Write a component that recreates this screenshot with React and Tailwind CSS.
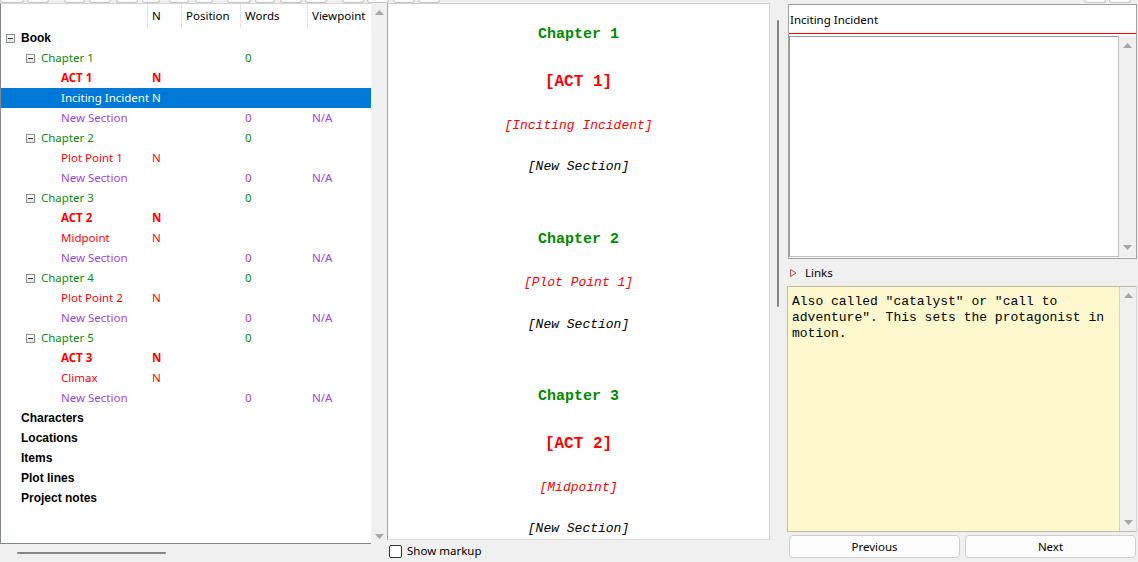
import React from 'react';

const GREEN = 'text-[#0c8c0c]';
const RED = 'text-[#ff0000]';
const PURPLE = 'text-[#a044e0]';

const rows = [
  { label: 'Book', pad: 'pl-[5px]', box: true, kind: 'root' },
  { label: 'Chapter 1', pad: 'pl-[25px]', box: true, kind: 'chapter', words: '0' },
  { label: 'ACT 1', pad: 'pl-[60px]', kind: 'act', n: 'N' },
  { label: 'Inciting Incident', pad: 'pl-[60px]', kind: 'sel', n: 'N' },
  { label: 'New Section', pad: 'pl-[60px]', kind: 'section', words: '0', vp: 'N/A' },
  { label: 'Chapter 2', pad: 'pl-[25px]', box: true, kind: 'chapter', words: '0' },
  { label: 'Plot Point 1', pad: 'pl-[60px]', kind: 'point', n: 'N' },
  { label: 'New Section', pad: 'pl-[60px]', kind: 'section', words: '0', vp: 'N/A' },
  { label: 'Chapter 3', pad: 'pl-[25px]', box: true, kind: 'chapter', words: '0' },
  { label: 'ACT 2', pad: 'pl-[60px]', kind: 'act', n: 'N' },
  { label: 'Midpoint', pad: 'pl-[60px]', kind: 'point', n: 'N' },
  { label: 'New Section', pad: 'pl-[60px]', kind: 'section', words: '0', vp: 'N/A' },
  { label: 'Chapter 4', pad: 'pl-[25px]', box: true, kind: 'chapter', words: '0' },
  { label: 'Plot Point 2', pad: 'pl-[60px]', kind: 'point', n: 'N' },
  { label: 'New Section', pad: 'pl-[60px]', kind: 'section', words: '0', vp: 'N/A' },
  { label: 'Chapter 5', pad: 'pl-[25px]', box: true, kind: 'chapter', words: '0' },
  { label: 'ACT 3', pad: 'pl-[60px]', kind: 'act', n: 'N' },
  { label: 'Climax', pad: 'pl-[60px]', kind: 'point', n: 'N' },
  { label: 'New Section', pad: 'pl-[60px]', kind: 'section', words: '0', vp: 'N/A' },
  { label: 'Characters', pad: 'pl-[20px]', kind: 'root' },
  { label: 'Locations', pad: 'pl-[20px]', kind: 'root' },
  { label: 'Items', pad: 'pl-[20px]', kind: 'root' },
  { label: 'Plot lines', pad: 'pl-[20px]', kind: 'root' },
  { label: 'Project notes', pad: 'pl-[20px]', kind: 'root' },
];

const kindClass = {
  root: "font-['Liberation_Sans',Arial,sans-serif] font-bold text-[12px] text-black",
  chapter: GREEN,
  act: `${RED} font-bold`,
  sel: 'text-white',
  section: PURPLE,
  point: RED,
};

const nClass = {
  act: `${RED} font-bold`,
  sel: 'text-white',
  point: RED,
};

function Up() {
  return (
    <svg width="9" height="5" viewBox="0 0 9 5" className="block">
      <path d="M0 5 L4.5 0 L9 5 Z" fill="#a6a6a6" />
    </svg>
  );
}

function Down() {
  return (
    <svg width="9" height="5" viewBox="0 0 9 5" className="block">
      <path d="M0 0 L4.5 5 L9 0 Z" fill="#a6a6a6" />
    </svg>
  );
}

function MinusBox() {
  return (
    <span className="w-[9px] h-[9px] border border-[#919191] bg-linear-to-b from-white to-[#e4e4e4] flex items-center justify-center mr-[6px] shrink-0">
      <span className="w-[5px] h-[1px] bg-[#2b3a55]" />
    </span>
  );
}

function TopButtons() {
  const cls = 'h-[3px] border border-t-0 border-[#c6c6c6] rounded-b-[3px] bg-[#fbfbfb] shrink-0';
  return (
    <div className="h-[3px] flex">
      <div className={`${cls} w-[24px]`} />
      <div className={`${cls} ml-[3px] w-[22px]`} />
      <div className={`${cls} ml-[15px] w-[21px]`} />
      <div className={`${cls} ml-[4px] w-[22px]`} />
      <div className={`${cls} ml-[5px] w-[22px]`} />
      <div className={`${cls} ml-[4px] w-[18px]`} />
      <div className={`${cls} ml-[9px] w-[20px]`} />
      <div className={`${cls} ml-[6px] w-[18px]`} />
      <div className={`${cls} ml-[14px] w-[24px]`} />
      <div className={`${cls} ml-[4px] w-[20px]`} />
      <div className={`${cls} ml-[5px] w-[22px]`} />
      <div className={`${cls} ml-[3px] w-[22px]`} />
      <div className={`${cls} ml-[15px] w-[22px]`} />
      <div className={`${cls} ml-[3px] w-[22px]`} />
      <div className={`${cls} ml-[4px] w-[22px]`} />
      <div className={`${cls} ml-[3px] w-[22px]`} />
      <div className={`${cls} ml-[644px] w-[22px]`} />
      <div className={`${cls} ml-[3px] w-[22px]`} />
    </div>
  );
}

function Tree() {
  return (
    <div className="w-[371px] h-full bg-white border-l border-t border-b border-l-[#828790] border-b-[#828790] border-t-[#d4d4d4] flex flex-col overflow-hidden">
      <div className="h-[24px] flex items-center text-black shrink-0">
        <div className="w-[146px] h-full" />
        <div className="w-[34px] h-full border-l border-[#e5e5e5] pl-[4px] flex items-center">N</div>
        <div className="w-[59px] h-full border-l border-[#e5e5e5] pl-[4px] flex items-center">Position</div>
        <div className="w-[67px] h-full border-l border-[#e5e5e5] pl-[4px] flex items-center">Words</div>
        <div className="w-[63px] h-full border-l border-[#e5e5e5] pl-[4px] flex items-center">Viewpoint</div>
      </div>
      {rows.map((r, i) => (
        <div
          key={i}
          className={`h-[20px] flex items-center shrink-0 ${r.kind === 'sel' ? 'bg-[#0078d7]' : ''}`}
        >
          <div className={`w-[146px] flex items-center whitespace-nowrap ${r.pad}`}>
            {r.box && <MinusBox />}
            <span className={kindClass[r.kind]}>{r.label}</span>
          </div>
          <div className={`w-[34px] pl-[5px] ${nClass[r.kind] || ''}`}>{r.n || ''}</div>
          <div className="w-[59px]" />
          <div className={`w-[67px] pl-[5px] ${r.kind === 'chapter' ? GREEN : PURPLE}`}>{r.words || ''}</div>
          <div className={`w-[63px] pl-[5px] ${PURPLE}`}>{r.vp || ''}</div>
        </div>
      ))}
    </div>
  );
}

function Manuscript() {
  const chap = 'text-[15px] font-bold text-[#008a00]';
  const act = 'text-[16px] font-bold text-[#ff0000]';
  const point = 'text-[13px] italic text-[#ff0000]';
  const sec = 'text-[13px] italic text-black';
  return (
    <div className="flex flex-col items-center pt-[21px] font-['Liberation_Mono',monospace] leading-[20px] whitespace-pre">
      <div className={chap}>Chapter 1</div>
      <div className={`mt-[27px] ${act}`}>[ACT 1]</div>
      <div className={`mt-[24px] ${point}`}>[Inciting Incident]</div>
      <div className={`mt-[21px] ${sec}`}>[New Section]</div>
      <div className={`mt-[53px] ${chap}`}>Chapter 2</div>
      <div className={`mt-[23px] ${point}`}>[Plot Point 1]</div>
      <div className={`mt-[22px] ${sec}`}>[New Section]</div>
      <div className={`mt-[52px] ${chap}`}>Chapter 3</div>
      <div className={`mt-[27px] ${act}`}>[ACT 2]</div>
      <div className={`mt-[24px] ${point}`}>[Midpoint]</div>
      <div className={`mt-[21px] ${sec}`}>[New Section]</div>
    </div>
  );
}

export default function App() {
  return (
    <div className="w-[1138px] h-[562px] bg-[#f0f0f0] overflow-hidden flex flex-col font-['Noto_Sans',sans-serif] text-[11.5px] text-black leading-none">
      <TopButtons />
      <div className="flex h-[559px]">
        {/* Left column */}
        <div className="w-[387px] flex flex-col shrink-0">
          <div className="h-[541px] flex">
            <Tree />
            <div className="w-[16px] h-full flex flex-col items-center justify-between pt-[7px] pb-[5px]">
              <Up />
              <Down />
            </div>
          </div>
          <div className="flex-1">
            <div className="ml-[17px] mt-[8px] w-[149px] h-[2px] bg-[#858585] rounded-full" />
          </div>
        </div>

        {/* Middle column */}
        <div className="w-[383px] flex flex-col shrink-0">
          <div className="h-[537px] bg-white border-l border-t border-r border-b border-l-[#a0a0a0] border-t-[#cfcfcf] border-r-[#d9d9d9] border-b-[#d9d9d9] overflow-hidden">
            <Manuscript />
          </div>
          <div className="flex items-center h-[22px] pl-[2px]">
            <span className="w-[13px] h-[13px] border border-[#333333] rounded-[2px] bg-white shrink-0" />
            <span className="ml-[5px] text-[11.5px]">Show markup</span>
          </div>
        </div>

        {/* Splitter with thin scroll thumb */}
        <div className="w-[16px] shrink-0">
          <div className="ml-[7px] mt-[17px] w-[2px] h-[287px] bg-[#858585] rounded-full" />
        </div>

        {/* Right column */}
        <div className="w-[352px] flex flex-col shrink-0">
          <div className="ml-[2px] mt-[1px] w-[349px] h-[255px] bg-white border border-[#a0a0a0] flex flex-col">
            <div className="h-[28px] flex items-center pl-[1px] pt-[1px] shrink-0">Inciting Incident</div>
            <div className="h-[1px] bg-[#ff0000] shrink-0" />
            <div className="h-[2px] shrink-0" />
            <div className="flex flex-1 mb-[1px]">
              <div className="flex-1 bg-white border-l border-t border-b border-r border-l-[#9a9a9a] border-t-[#9a9a9a] border-b-[#bdbdbd] border-r-[#bdbdbd]" />
              <div className="w-[17px] bg-[#f0f0f0] flex flex-col items-center justify-between pt-[7px] pb-[7px]">
                <Up />
                <Down />
              </div>
            </div>
          </div>
          <div className="h-[27px] flex items-center pl-[4px] shrink-0">
            <svg width="7" height="8" viewBox="0 0 7 8" className="block">
              <path d="M0.5 0.5 L6 4 L0.5 7.5 Z" fill="none" stroke="#b25050" strokeWidth="1" />
            </svg>
            <span className="ml-[8px]">Links</span>
          </div>
          <div className="ml-[1px] w-[350px] h-[246px] flex border border-[#c2bb9c] border-r-[#d9d9d9] shrink-0">
            <div className="flex-1 bg-[#fdf8cd] border-r border-[#d8d3b4] pt-[7px] pl-[4px] font-['Liberation_Mono',monospace] text-[13px] leading-[16px] whitespace-pre text-black">
              <div>Also called "catalyst" or "call to</div>
              <div>adventure". This sets the protagonist in</div>
              <div>motion.</div>
            </div>
            <div className="w-[16px] bg-[#f0f0f0] flex flex-col items-center justify-between pt-[6px] pb-[6px]">
              <Up />
              <Down />
            </div>
          </div>
          <div className="flex gap-[5px] pl-[3px] mt-[3px] h-[23px]">
            <button className="w-[171px] h-full bg-[#fdfdfd] border border-[#d0d0d0] rounded-[4px] text-[11.5px] text-black flex items-center justify-center">Previous</button>
            <button className="w-[171px] h-full bg-[#fdfdfd] border border-[#d0d0d0] rounded-[4px] text-[11.5px] text-black flex items-center justify-center">Next</button>
          </div>
        </div>
      </div>
    </div>
  );
}
